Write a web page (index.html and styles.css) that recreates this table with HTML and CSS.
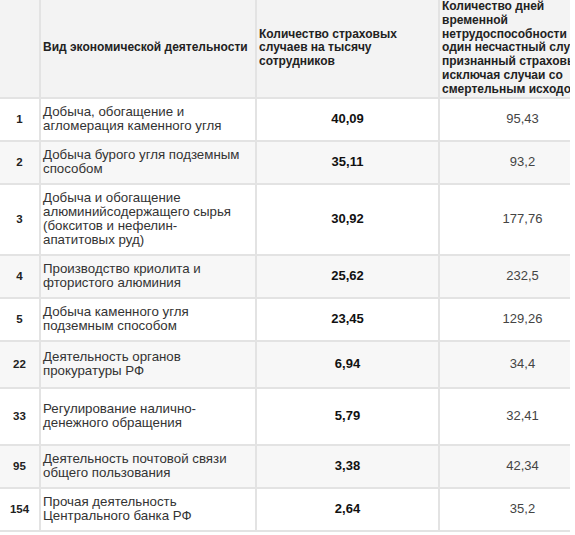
FILE: index.html
```html
<!DOCTYPE html>
<html lang="ru">
<head>
<meta charset="utf-8">
<title>Таблица</title>
<link rel="stylesheet" href="styles.css">
</head>
<body>
<div class="wrap">
<table class="stats">
  <colgroup>
    <col class="c-num">
    <col class="c-name">
    <col class="c-cases">
    <col class="c-days">
  </colgroup>
  <thead>
    <tr>
      <th class="num"></th>
      <th>Вид экономической деятельности</th>
      <th>Количество страховых случаев на тысячу сотрудников</th>
      <th>Количество дней временной нетрудоспособности на один несчастный случай, признанный страховым, исключая случаи со смертельным исходом</th>
    </tr>
  </thead>
  <tbody>
    <tr>
      <td class="num">1</td>
      <td class="name">Добыча, обогащение и<br>агломерация каменного угля</td>
      <td class="cases">40,09</td>
      <td class="days">95,43</td>
    </tr>
    <tr class="alt">
      <td class="num">2</td>
      <td class="name">Добыча бурого угля подземным<br>способом</td>
      <td class="cases">35,11</td>
      <td class="days">93,2</td>
    </tr>
    <tr>
      <td class="num">3</td>
      <td class="name">Добыча и обогащение<br>алюминийсодержащего сырья<br>(бокситов и нефелин-<br>апатитовых руд)</td>
      <td class="cases">30,92</td>
      <td class="days">177,76</td>
    </tr>
    <tr class="alt">
      <td class="num">4</td>
      <td class="name">Производство криолита и<br>фтористого алюминия</td>
      <td class="cases">25,62</td>
      <td class="days">232,5</td>
    </tr>
    <tr>
      <td class="num">5</td>
      <td class="name">Добыча каменного угля<br>подземным способом</td>
      <td class="cases">23,45</td>
      <td class="days">129,26</td>
    </tr>
    <tr class="alt mid">
      <td class="num">22</td>
      <td class="name">Деятельность органов<br>прокуратуры РФ</td>
      <td class="cases">6,94</td>
      <td class="days">34,4</td>
    </tr>
    <tr class="tall">
      <td class="num">33</td>
      <td class="name">Регулирование налично-<br>денежного обращения</td>
      <td class="cases">5,79</td>
      <td class="days">32,41</td>
    </tr>
    <tr class="alt">
      <td class="num">95</td>
      <td class="name">Деятельность почтовой связи<br>общего пользования</td>
      <td class="cases">3,38</td>
      <td class="days">42,34</td>
    </tr>
    <tr>
      <td class="num">154</td>
      <td class="name">Прочая деятельность<br>Центрального банка РФ</td>
      <td class="cases">2,64</td>
      <td class="days">35,2</td>
    </tr>
  </tbody>
</table>
</div>
</body>
</html>
```

FILE: styles.css
```css
html, body {
  margin: 0;
  padding: 0;
  background: #ffffff;
}

.wrap {
  width: 570px;
  overflow: hidden;
}

.stats {
  width: 617px;
  table-layout: fixed;
  border-collapse: separate;
  border-spacing: 0;
  font-family: "Liberation Sans", Arial, sans-serif;
  color: #333333;
}

.c-num { width: 41px; }
.c-name { width: 216px; }
.c-cases { width: 183px; }
.c-days { width: 177px; }

.stats th,
.stats td {
  border-right: 2px solid #e3e3e3;
  border-bottom: 2px solid #e3e3e3;
  vertical-align: middle;
}

.stats th {
  background: #f3f3f3;
  height: 98px;
  box-sizing: border-box;
  padding: 0 2px;
  font-size: 12px;
  line-height: 13.8px;
  font-weight: bold;
  color: #222222;
  text-align: left;
}

.stats td {
  padding: 6.5px 2px 6.5px;
  font-size: 13.3px;
  line-height: 14px;
}

.stats .alt td {
  background: #f7f7f7;
}

.stats .mid { height: 47px; }
.stats .tall { height: 57px; }

.stats td.num {
  text-align: center;
  font-weight: bold;
  font-size: 11.5px;
  color: #222222;
}

.stats td.name {
  text-align: left;
  color: #333333;
}

.stats td.cases {
  text-align: center;
  font-weight: bold;
  font-size: 13px;
  color: #111111;
}

.stats td.days {
  text-align: center;
  font-size: 13px;
  color: #444444;
  padding-right: 12px;
}
```
